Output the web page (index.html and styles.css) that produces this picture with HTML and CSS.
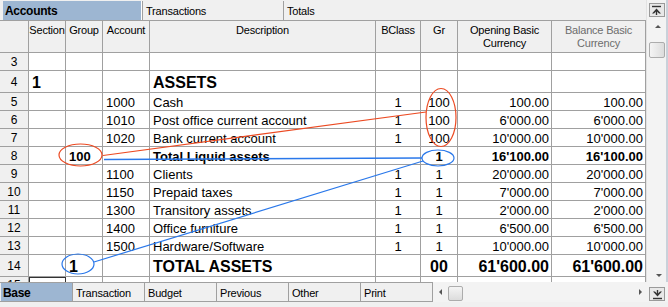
FILE: index.html
```html
<!DOCTYPE html>
<html lang="en">
<head>
    <meta charset="UTF-8">
    <title>Accounts</title>
    <link rel="stylesheet" href="styles.css">
</head>
<body>
<div class="window">
    <div class="upper">
        <div class="sheet">
            <div class="tabs top-tabs">
                <div class="tab active tab-accounts">Accounts</div>
                <div class="tab tab-transactions">Transactions</div>
                <div class="tab tab-totals">Totals</div>
            </div>
            <div class="grid">
                <div class="row head">
                    <div class="rh"></div>
                    <div>Section</div>
                    <div>Group</div>
                    <div>Account</div>
                    <div>Description</div>
                    <div>BClass</div>
                    <div>Gr</div>
                    <div>Opening Basic<br>Currency</div>
                    <div class="dim">Balance Basic<br>Currency</div>
                </div>
                <div class="row">
                    <div class="rh">3</div><div></div><div></div><div></div><div></div><div></div><div></div><div></div><div></div>
                </div>
                <div class="row tall big">
                    <div class="rh">4</div><div>1</div><div></div><div></div><div>ASSETS</div><div></div><div></div><div></div><div></div>
                </div>
                <div class="row">
                    <div class="rh">5</div><div></div><div></div><div>1000</div><div>Cash</div><div class="c">1</div><div class="c">100</div><div class="r">100.00</div><div class="r">100.00</div>
                </div>
                <div class="row">
                    <div class="rh">6</div><div></div><div></div><div>1010</div><div>Post office current account</div><div class="c">1</div><div class="c">100</div><div class="r">6'000.00</div><div class="r">6'000.00</div>
                </div>
                <div class="row">
                    <div class="rh">7</div><div></div><div></div><div>1020</div><div>Bank current account</div><div class="c">1</div><div class="c">100</div><div class="r">10'000.00</div><div class="r">10'000.00</div>
                </div>
                <div class="row bold">
                    <div class="rh">8</div><div></div><div>100</div><div></div><div>Total Liquid assets</div><div class="c"></div><div class="c">1</div><div class="r">16'100.00</div><div class="r">16'100.00</div>
                </div>
                <div class="row">
                    <div class="rh">9</div><div></div><div></div><div>1100</div><div>Clients</div><div class="c">1</div><div class="c">1</div><div class="r">20'000.00</div><div class="r">20'000.00</div>
                </div>
                <div class="row">
                    <div class="rh">10</div><div></div><div></div><div>1150</div><div>Prepaid taxes</div><div class="c">1</div><div class="c">1</div><div class="r">7'000.00</div><div class="r">7'000.00</div>
                </div>
                <div class="row">
                    <div class="rh">11</div><div></div><div></div><div>1300</div><div>Transitory assets</div><div class="c">1</div><div class="c">1</div><div class="r">2'000.00</div><div class="r">2'000.00</div>
                </div>
                <div class="row">
                    <div class="rh">12</div><div></div><div></div><div>1400</div><div>Office furniture</div><div class="c">1</div><div class="c">1</div><div class="r">6'500.00</div><div class="r">6'500.00</div>
                </div>
                <div class="row">
                    <div class="rh">13</div><div></div><div></div><div>1500</div><div>Hardware/Software</div><div class="c">1</div><div class="c">1</div><div class="r">10'000.00</div><div class="r">10'000.00</div>
                </div>
                <div class="row tall big">
                    <div class="rh">14</div><div></div><div>1</div><div></div><div>TOTAL ASSETS</div><div class="c"></div><div class="c">00</div><div class="r">61'600.00</div><div class="r">61'600.00</div>
                </div>
                <div class="row last">
                    <div class="rh">15</div><div class="selected"></div><div></div><div></div><div></div><div></div><div></div><div></div><div></div>
                </div>
            </div>
        </div>
        <div class="vscroll">
            <div class="btn-box">
                <svg width="13" height="11" viewBox="0 0 13 11"><path d="M2 1.5h9" stroke="#333" stroke-width="1.4"/><path d="M6.5 3.5 L2 8.5 L4 8.5 L6.5 6 L9 8.5 L11 8.5 Z" fill="#333"/><path d="M6.5 5v5" stroke="#333" stroke-width="1.4"/></svg>
            </div>
            <div class="arrow up"></div>
            <div class="vthumb"></div>
            <div class="vtrack"></div>
            <div class="arrow down"></div>
        </div>
    </div>
    <div class="lower">
        <div class="tabs bottom-tabs">
            <div class="tab active tab-base">Base</div>
            <div class="tab">Transaction</div>
            <div class="tab">Budget</div>
            <div class="tab">Previous</div>
            <div class="tab">Other</div>
            <div class="tab">Print</div>
        </div>
        <div class="hscroll">
            <div class="arrow left"></div>
            <div class="hthumb"></div>
            <div class="htrack"></div>
            <div class="arrow right"></div>
        </div>
        <div class="corner">
            <div class="btn-box">
                <svg width="13" height="11" viewBox="0 0 13 11"><path d="M6.5 1v5" stroke="#333" stroke-width="1.4"/><path d="M6.5 7.5 L2 2.5 L4 2.5 L6.5 5 L9 2.5 L11 2.5 Z" fill="#333"/><path d="M2 9.5h9" stroke="#333" stroke-width="1.4"/></svg>
            </div>
        </div>
    </div>
    <svg class="marks" width="668" height="307" viewBox="0 0 668 307">
        <ellipse cx="80.5" cy="155" rx="21.5" ry="11" fill="none" stroke="#ec4a22" stroke-width="1.2"/>
        <ellipse cx="441" cy="117.5" rx="15" ry="29" fill="none" stroke="#ec4a22" stroke-width="1.2"/>
        <line x1="103" y1="155.5" x2="426" y2="112" stroke="#ec4a22" stroke-width="1.2"/>
        <ellipse cx="438" cy="158" rx="16" ry="8" fill="none" stroke="#2a78ea" stroke-width="1.2"/>
        <line x1="104" y1="159.5" x2="422" y2="158" stroke="#2a78ea" stroke-width="1.4"/>
        <line x1="423" y1="161" x2="94" y2="262" stroke="#2a78ea" stroke-width="1.2"/>
        <ellipse cx="78" cy="264" rx="16" ry="10" fill="none" stroke="#2a78ea" stroke-width="1.2"/>
    </svg>
</div>
</body>
</html>
```

FILE: styles.css
```css
* {
    box-sizing: border-box;
}
body {
    margin: 0;
    background: #f0f0f0;
    font-family: "Liberation Sans", Arial, sans-serif;
    color: #000;
}
.window {
    position: relative;
    width: 668px;
    height: 307px;
    overflow: hidden;
    background: #f0f0f0;
}
.upper {
    display: flex;
    height: 282px;
}
.sheet {
    width: 646px;
    display: flex;
    flex-direction: column;
}

/* tab strips */
.tabs {
    display: flex;
}
.tab {
    display: flex;
    align-items: center;
    padding: 0 3px;
    font-size: 11px;
    letter-spacing: -0.2px;
    background: #f0f0f0;
    border-right: 1px solid #a0a0a0;
    white-space: nowrap;
}
.tab.active {
    background: #9db6d2;
    font-weight: bold;
    font-size: 12px;
    letter-spacing: -0.3px;
    padding-left: 2px;
}
.top-tabs {
    height: 21px;
    padding: 1px 0 0 3px;
    border-bottom: 1px solid #a0a0a0;
}
.tab-accounts {
    width: 139px;
    border-right: 1px solid #fff;
    box-shadow: 1px 0 0 #a0a0a0;
}
.tab-transactions {
    width: 141px;
    margin-left: 1px;
}
.tab-totals {
    flex: 1;
    border-right: none;
}

/* grid */
.grid {
    flex: 1;
    overflow: hidden;
}
.row {
    display: grid;
    grid-template-columns: 29px 37px 37px 47px 226px 45px 37px 94px 94px;
    height: 18px;
}
.row > div {
    display: flex;
    align-items: flex-end;
    padding: 0 3px;
    background: #fff;
    border-right: 1px solid #a0a0a0;
    border-bottom: 1px solid #a0a0a0;
    font-size: 13px;
    line-height: 15px;
    white-space: nowrap;
    overflow: hidden;
}
.row > .rh {
    background: #f0f0f0;
    justify-content: center;
    align-items: center;
    font-size: 12px;
    line-height: 14px;
    padding: 0;
}
.row > .c {
    justify-content: center;
    padding: 0;
}
.row > .r {
    justify-content: flex-end;
    padding: 0 2px 0 0;
}
.row.head {
    height: 32px;
}
.row.head > div {
    background: #f0f0f0;
    align-items: flex-start;
    justify-content: center;
    text-align: center;
    font-size: 11px;
    line-height: 13px;
    letter-spacing: -0.2px;
    padding: 3px 0 0;
}
.row.head > .dim {
    color: #6d6d6d;
}
.row.tall {
    height: 22px;
}
.row.big > div {
    font-size: 16px;
    line-height: 18px;
    font-weight: bold;
}
.row.big > .rh {
    font-size: 12px;
    font-weight: normal;
}
.row.bold > div {
    font-weight: bold;
}
.row.bold > .rh {
    font-weight: normal;
}
.row.last {
    height: 5px;
}
.row.last > div {
    border-bottom: none;
    align-items: flex-start;
}
.row.last > .rh {
    align-items: flex-start;
    padding-top: 2px;
    line-height: 12px;
}
.row.last > .selected {
    border: 1px solid #333;
    border-bottom: none;
}

/* vertical scrollbar */
.vscroll {
    width: 22px;
    display: flex;
    flex-direction: column;
    align-items: center;
    background: #f3f3f3;
    border-left: 1px solid #e2e2e2;
    border-right: 2px solid #c9d1da;
    padding-top: 3px;
}
.btn-box {
    width: 16px;
    height: 14px;
    border: 1px solid #9a9a9a;
    background: #e8e8e8;
    display: flex;
    align-items: center;
    justify-content: center;
}
.arrow {
    width: 0;
    height: 0;
    border: 3px solid transparent;
}
.arrow.up {
    margin-top: 8px;
    border-bottom: 3px solid #555;
    border-top-width: 0;
    margin-left: 2px;
}
.vthumb {
    width: 16px;
    height: 16px;
    margin-top: 14px;
    border: 1px solid #acacac;
    border-radius: 2px;
    background: linear-gradient(to right, #f4f4f4, #dcdcdc);
}
.vtrack {
    flex: 1;
}
.arrow.down {
    border-top: 3px solid #555;
    border-bottom-width: 0;
    margin: 0 0 5px 4px;
}

/* bottom strip */
.lower {
    display: flex;
    height: 20px;
}
.bottom-tabs {
    width: 433px;
    border-top: 1px solid #a0a0a0;
    border-bottom: 1px solid #a0a0a0;
}
.bottom-tabs .tab {
    width: 72px;
    padding-top: 1px;
}
.bottom-tabs .tab-base {
    width: 73px;
    border-left: 1px solid #f0f0f0;
    padding-left: 2px;
}
.hscroll {
    width: 213px;
    display: flex;
    align-items: center;
    padding: 0 4px 0 6px;
    background: #f3f3f3;
}
.arrow.left {
    border-right: 3px solid #555;
    border-left-width: 0;
    margin-right: 6px;
}
.hthumb {
    width: 15px;
    height: 15px;
    margin-top: 3px;
    border: 1px solid #acacac;
    border-radius: 2px;
    background: linear-gradient(to bottom, #f4f4f4, #dcdcdc);
}
.htrack {
    flex: 1;
}
.arrow.right {
    border-left: 3px solid #555;
    border-right-width: 0;
}
.corner {
    width: 22px;
    display: flex;
    align-items: flex-start;
    justify-content: center;
    padding-top: 5px;
    background: #f3f3f3;
}

/* annotation overlay */
.marks {
    position: absolute;
    left: 0;
    top: 0;
    pointer-events: none;
}
```
